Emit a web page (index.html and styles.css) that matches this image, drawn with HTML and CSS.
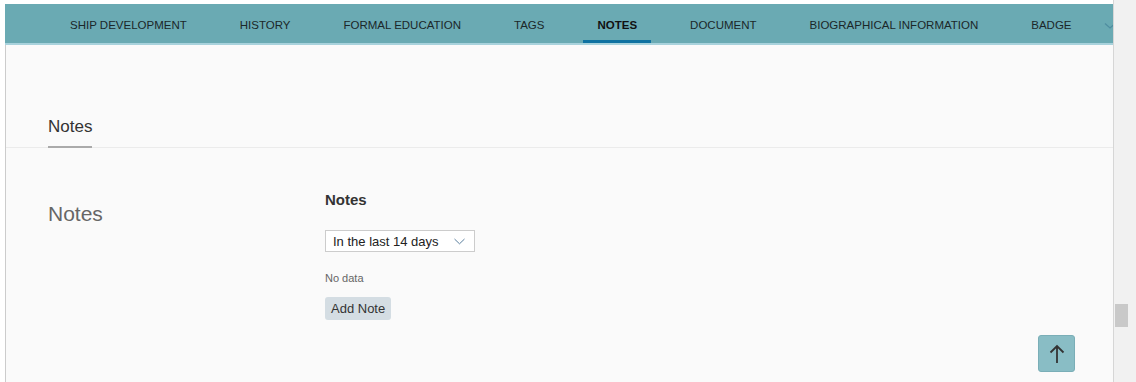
FILE: index.html
```html
<!DOCTYPE html>
<html lang="en">
<head>
  <meta charset="UTF-8">
  <title>Notes</title>
  <link rel="stylesheet" href="styles.css">
</head>
<body>
  <div class="page">
    <nav class="tabs">
      <ul>
        <li>Ship Development</li>
        <li>History</li>
        <li>Formal Education</li>
        <li>Tags</li>
        <li class="active">Notes</li>
        <li>Document</li>
        <li>Biographical Information</li>
        <li>Badge</li>
      </ul>
      <span class="more">
        <svg width="12" height="8" viewBox="0 0 12 8"><path d="M1 1.5 L6 6 L11 1.5" fill="none" stroke="#4f8ea0" stroke-width="1.3"/></svg>
      </span>
    </nav>
    <main class="content">
      <div class="section-head">
        <span class="section-tab">Notes</span>
      </div>
      <div class="row">
        <div class="label">Notes</div>
        <div class="panel">
          <h3>Notes</h3>
          <div class="select">
            <span>In the last 14 days</span>
            <svg width="11" height="7" viewBox="0 0 11 7"><path d="M0.5 1 L5.5 5.8 L10.5 1" fill="none" stroke="#5b7f9e" stroke-width="1"/></svg>
          </div>
          <p class="empty">No data</p>
          <button class="add">Add Note</button>
        </div>
      </div>
      <button class="to-top" title="Back to top">
        <svg width="16" height="20" viewBox="0 0 16 20"><path d="M8 19 V2 M1.5 8.5 L8 2 L14.5 8.5" fill="none" stroke="#333" stroke-width="1.8"/></svg>
      </button>
    </main>
  </div>
  <div class="scrollbar"><div class="thumb"></div></div>
</body>
</html>
```

FILE: styles.css
```css
html, body { height: 100%; }
body { margin: 0; display: flex; height: 382px; overflow: hidden; background: #fff; font-family: "Liberation Sans", Arial, sans-serif; color: #333; }

.page { width: 1108px; padding: 4px 0 0 5px; display: flex; flex-direction: column; }

.tabs { height: 39px; background: #6aaab3; border-bottom: 2px solid #a8d2dc; display: flex; align-items: stretch; overflow: hidden; }
.tabs ul { list-style: none; margin: 0; padding: 0 0 0 51px; display: flex; gap: 25px; flex: 1; white-space: nowrap; }
.tabs li { padding: 6px 14px 0; font-size: 11.5px; text-transform: uppercase; color: #1b2729; display: flex; align-items: center; border-bottom: 5px solid transparent; margin-bottom: -2px; }
.tabs li.active { font-weight: bold; color: #111; border-bottom-color: #0f72a1; }
.more { width: 12px; display: flex; align-items: center; padding-top: 4px; margin-right: -3px; }

.content { flex: 1; position: relative; background: #fafafa; border-left: 1px solid #ccc; }

.section-head { padding: 72px 0 0 42px; border-bottom: 1px solid #ebebeb; }
.section-tab { display: inline-block; font-size: 17px; line-height: 20px; padding-bottom: 9px; border-bottom: 2px solid #aaa; margin-bottom: -1px; color: #333; }

.row { display: flex; padding: 43px 0 0 42px; }
.label { width: 277px; margin-top: 11px; font-size: 21px; line-height: 24px; color: #666; }
.panel h3 { margin: 0; font-size: 15px; line-height: 18px; font-weight: bold; color: #333; }
.select { margin-top: 21px; height: 20px; border: 1px solid #ccc; background: #fff; display: flex; align-items: center; justify-content: space-between; padding: 0 9px 0 7px; box-sizing: content-box; width: 132px; font-size: 13px; color: #222; }
.empty { margin: 20px 0 0; font-size: 11px; line-height: 13px; color: #666; }
.add { margin-top: 12px; height: 23px; padding: 0 6px; border: none; border-radius: 3px; background: #d4dde3; font-family: inherit; font-size: 13px; color: #333; }

.to-top { position: absolute; right: 38px; bottom: 10px; width: 37px; height: 37px; padding: 0; border: 1px solid #7aaeb7; border-radius: 3px; background: #89bdc5; display: flex; align-items: center; justify-content: center; }

.scrollbar { width: 22px; background: #f1f1f1; border-left: 1px solid #d6d6d6; }
.thumb { margin: 304px 0 0 1px; width: 13px; height: 23px; background: #c9c9c9; }
```
